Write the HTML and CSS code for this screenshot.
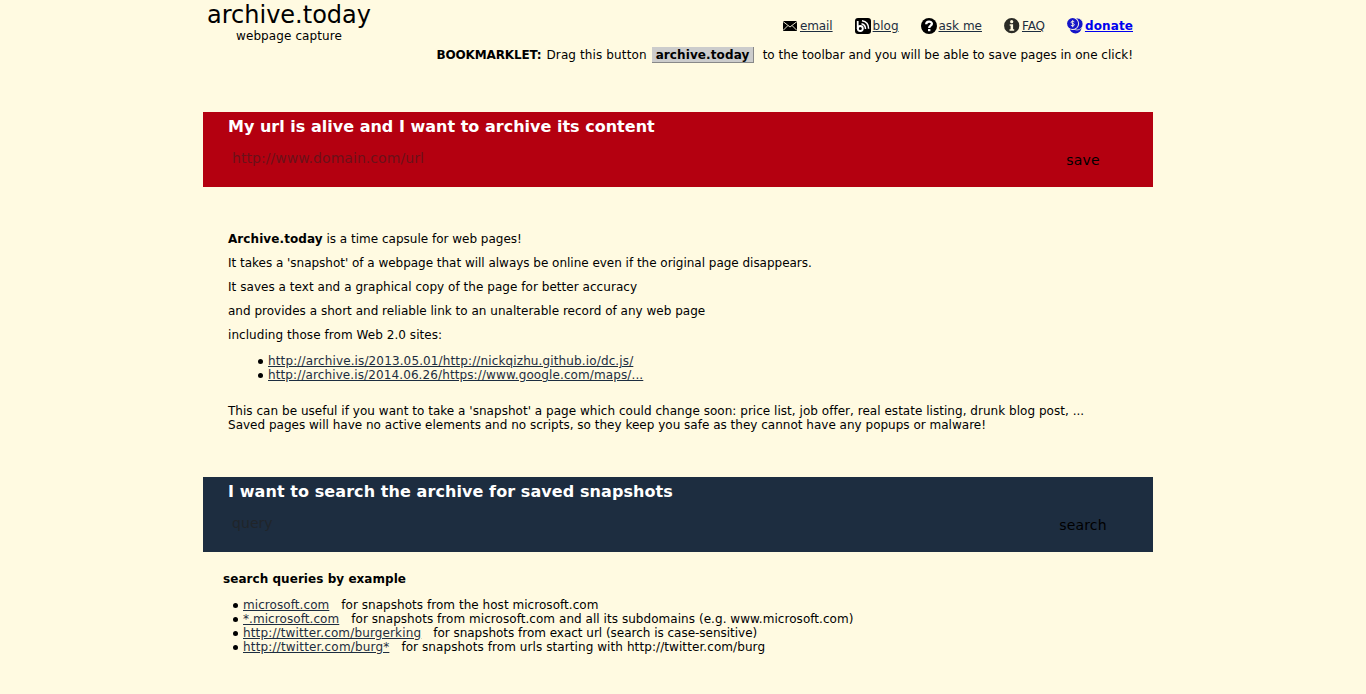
FILE: index.html
```html
<!DOCTYPE html>
<html lang="en">
<head>
<meta charset="utf-8">
<title>archive.today</title>
<link rel="stylesheet" href="styles.css">
</head>
<body>
<div class="page">
  <header class="header">
    <div class="brand"><div class="brand-name">archive.today</div><div class="brand-sub">webpage capture</div></div>
    <div class="header-right">
      <nav class="nav">
        <a class="nav-item nav-email" href="#"><svg class="icon" width="14" height="10" viewBox="0 0 14 10"><rect width="14" height="10" fill="#000"/><path d="M0 .5 7 6l7-5.500M0 9.500 5 4.500M14 9.500 9 4.500" fill="none" stroke="#fffae1" stroke-width=".9"/></svg><span class="nav-text">email</span></a>
        <a class="nav-item" href="#"><svg class="icon" width="16" height="16" viewBox="0 0 16 16"><rect width="16" height="16" rx="3" fill="#000"/><path d="M2.700 3v8" stroke="#fff" stroke-width="1.800"/><circle cx="5.300" cy="10.500" r="2.500" fill="none" stroke="#fff" stroke-width="1.900"/><path d="M6.500 5.800q4 .8 4 5.200M7 2.800q6.600 1 6.600 8" fill="none" stroke="#fff" stroke-width="1.500"/></svg><span class="nav-text">blog</span></a>
        <a class="nav-item" href="#"><svg class="icon" width="16" height="16" viewBox="0 0 16 16"><circle cx="8" cy="8" r="8" fill="#000"/><path d="M5.200 6.200C5.200 2.700 10.900 2.900 10.900 5.800 10.900 7.700 8.200 7.500 8.200 9.900" fill="none" stroke="#fff" stroke-width="2.300"/><rect x="7" y="11" width="2.400" height="2.200" fill="#fff"/></svg><span class="nav-text">ask me</span></a>
        <a class="nav-item" href="#"><svg class="icon" width="16" height="16" viewBox="0 0 16 16"><circle cx="7.700" cy="7.700" r="7.600" fill="#2b2b26"/><circle cx="7.700" cy="3.700" r="1.600" fill="#fffae1"/><path d="M5.700 6.300h3.400v5h1.100v1.400H5.500v-1.400h1.100V7.700h-.9z" fill="#fffae1"/></svg><span class="nav-text nav-faq">FAQ</span></a>
        <a class="nav-item nav-donate" href="#"><svg class="icon" width="16" height="16" viewBox="0 0 16 16"><circle cx="8.500" cy="9.500" r="6" fill="#1515c8"/><circle cx="10" cy="6" r="6" fill="#1515c8" stroke="#fffae1" stroke-width=".7"/><circle cx="5.800" cy="5.600" r="6.300" fill="#fffae1"/><circle cx="5.600" cy="5.600" r="5.500" fill="#1515c8"/><path d="M7.300 3.900C6.200 3 4.100 3 4.100 4.300c0 1.500 3.200.9 3.200 2.400 0 1.400-2.200 1.500-3.400.6M5.700 2.200v7" fill="none" stroke="#fffae1" stroke-width=".9"/></svg><span class="nav-text">donate</span></a>
      </nav>
      <div class="bookmarklet"><b class="bm-label">BOOKMARKLET:</b><span class="bm-drag">Drag this button</span><a class="bm-button">archive.today</a><span>to the toolbar and you will be able to save pages in one click!</span></div>
    </div>
  </header>

  <form class="panel panel-save">
    <div class="panel-title">My url is alive and I want to archive its content</div>
    <div class="panel-row"><input class="field" type="text" placeholder="http://www.domain.com/url"><button class="submit" type="button">save</button></div>
  </form>

  <section class="about">
    <p class="lead"><b class="lead-name">Archive.today</b> is a time capsule for web pages!</p>
    <p class="lead lead-snapshot">It takes a 'snapshot' of a webpage that will always be online even if the original page disappears.</p>
    <p class="lead lead-copy">It saves a text and a graphical copy of the page for better accuracy</p>
    <p class="lead lead-record">and provides a short and reliable link to an unalterable record of any web page</p>
    <p class="lead lead-sites">including those from Web 2.0 sites:</p>
    <ul class="list samples">
      <li><a class="link link-code" href="#">http://archive.is/2013.05.01/http://nickqizhu.github.io/dc.js/</a></li>
      <li><a class="link link-maps" href="#">http://archive.is/2014.06.26/https://www.google.com/maps/...</a></li>
    </ul>
    <p class="note note-use">This can be useful if you want to take a 'snapshot' a page which could change soon: price list, job offer, real estate listing, drunk blog post, ...</p>
    <p class="note note-safe">Saved pages will have no active elements and no scripts, so they keep you safe as they cannot have any popups or malware!</p>
  </section>

  <form class="panel panel-search">
    <div class="panel-title">I want to search the archive for saved snapshots</div>
    <div class="panel-row"><input class="field" type="text" placeholder="query"><button class="submit" type="button">search</button></div>
  </form>

  <section class="examples">
    <b class="examples-title">search queries by example</b>
    <ul class="list queries">
      <li class="q-host"><a class="link" href="#">microsoft.com</a><span class="hint">for snapshots from the host microsoft.com</span></li>
      <li class="q-sub"><a class="link" href="#">*.microsoft.com</a><span class="hint">for snapshots from microsoft.com and all its subdomains (e.g. www.microsoft.com)</span></li>
      <li class="q-exact"><a class="link" href="#">http://twitter.com/burgerking</a><span class="hint">for snapshots from exact url (search is case-sensitive)</span></li>
      <li class="q-prefix"><a class="link" href="#">http://twitter.com/burg*</a><span class="hint">for snapshots from urls starting with http://twitter.com/burg</span></li>
    </ul>
  </section>
</div>
</body>
</html>
```
FILE: styles.css
```css
body {
  margin: 0;
  background: #fffae1;
  color: #000;
  font: 12px/14px "DejaVu Sans", Verdana, sans-serif;
}
.page { width: 950px; margin-left: 203px; }
.header { display: flex; justify-content: space-between; height: 112px; }
.brand { width: 172px; text-align: center; }
.brand-name { padding-top: 1px; font-size: 24px; line-height: 29px; }
.brand-sub { line-height: 12px; letter-spacing: .1px; }
.header-right { display: flex; flex-direction: column; align-items: flex-end; padding-right: 20px; }
.nav { display: flex; gap: 22px; height: 16px; margin-top: 18px; align-items: center; }
.nav-item { display: flex; align-items: center; gap: 2px; color: #1d2d40; text-decoration: none; }
.nav-text { text-decoration: underline; }
.nav-email { gap: 3px; }
.nav-email .nav-text { letter-spacing: -.1px; }
.nav-faq { letter-spacing: -.1px; }
.icon { display: block; }
.nav-donate { color: #0000ee; font-weight: bold; letter-spacing: .12px; }
.bookmarklet { display: flex; align-items: center; margin-top: 12px; height: 17px; white-space: nowrap; }
.bm-label { margin-right: 5px; letter-spacing: -.15px; }
.bm-drag { letter-spacing: .12px; }
.bm-button {
  width: 101px;
  height: 15px;
  box-sizing: content-box;
  margin: 0 9px 0 5px;
  border-right: 1px solid #888;
  border-bottom: 1px solid #888;
  background: #ccc;
  font-weight: bold;
  line-height: 16px;
  letter-spacing: .1px;
  text-indent: 4px;
}
.panel { height: 75px; box-sizing: border-box; padding: 5px 25px 0; }
.panel-save { background: #b40010; }
.panel-search { background: #1d2d40; }
.panel-title { color: #fff; font-size: 16px; line-height: 19px; font-weight: bold; }
.panel-save .panel-title { letter-spacing: .012px; }
.panel-search .panel-title { letter-spacing: .08px; }
.panel-row { display: flex; justify-content: space-between; margin-top: 11px; }
.field {
  width: 780px;
  height: 22px;
  box-sizing: border-box;
  padding: 0 4px;
  border: 0;
  background: transparent;
  font: 14px "DejaVu Sans", Verdana, sans-serif;
  letter-spacing: .06px;
}
.field::placeholder { color: #222; opacity: .5; }
.panel-search .field::placeholder { opacity: .7; }
.submit {
  width: 90px;
  height: 26px;
  padding: 0;
  border: 0;
  background: transparent;
  color: #000;
  font: 14px "DejaVu Sans", Verdana, sans-serif;
  letter-spacing: .15px;
}
.about { height: 290px; box-sizing: border-box; padding: 40px 25px 0; white-space: nowrap; }
.lead { margin: 0; line-height: 24px; }
.lead-name { letter-spacing: .08px; }
.lead-snapshot { letter-spacing: -.02px; }
.lead-copy { letter-spacing: .043px; }
.lead-record { letter-spacing: .015px; }
.lead-sites { letter-spacing: .057px; }
.list { list-style: none; }
.list li { display: flex; }
.list li::before {
  content: "";
  width: 5px;
  height: 5px;
  margin: 5px 5px 0 -10px;
  border-radius: 50%;
  background: #000;
}
.samples { margin: 7px 0 22px; padding-left: 40px; }
.link { color: #1d2d40; }
.link-code { letter-spacing: .131px; }
.link-maps { letter-spacing: .11px; }
.note { margin: 0; }
.note-use { letter-spacing: .031px; }
.note-safe { letter-spacing: .008px; }
.examples { padding: 20px 20px 0; }
.examples-title { letter-spacing: .05px; }
.queries { margin: 12px 0 0; padding-left: 20px; }
.hint { margin-left: 12px; }
.q-host .link { letter-spacing: .07px; }
.q-host .hint { letter-spacing: .04px; }
.q-sub .link { letter-spacing: .07px; }
.q-sub .hint { letter-spacing: .05px; }
.q-exact .link { letter-spacing: .14px; }
.q-exact .hint { letter-spacing: -.018px; }
.q-prefix .link { letter-spacing: .17px; }
.q-prefix .hint { letter-spacing: .083px; }
```
